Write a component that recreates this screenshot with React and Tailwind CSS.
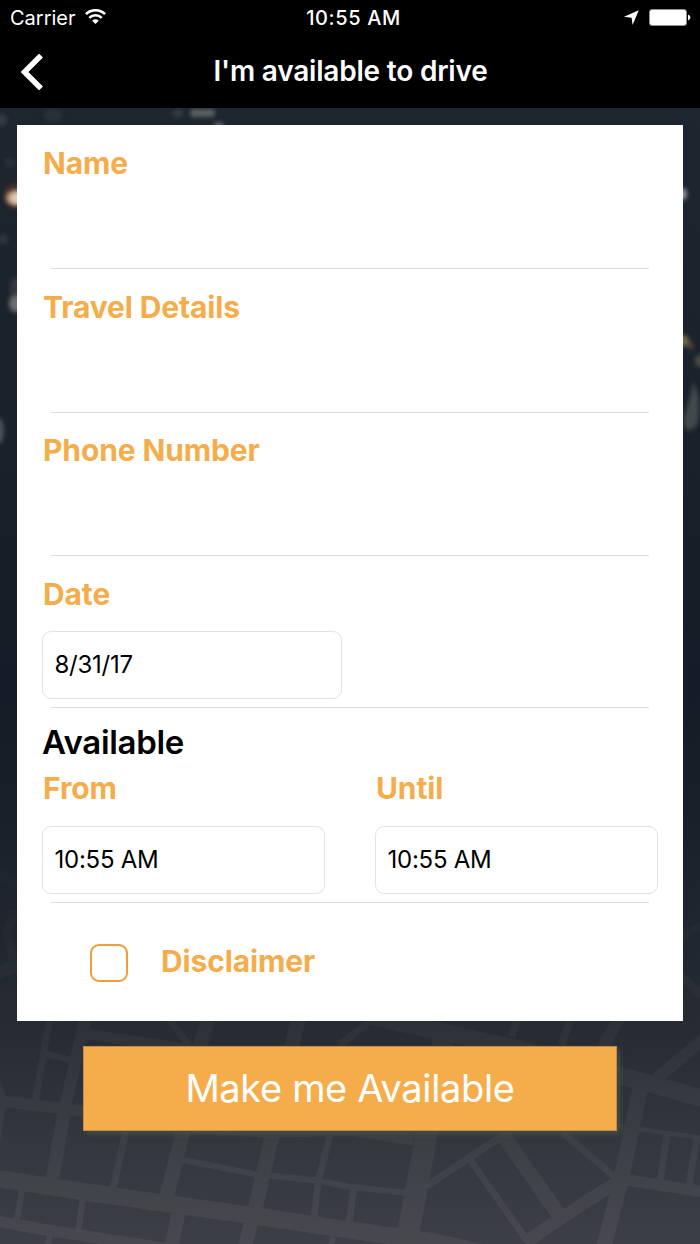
import { useState } from "react";

// street map roads, drawn on a 2100 x 702 grid: [width, points]
const roads = [
  [52, "-20,504 0,507 250,545 510,582 745,615 1050,660 1300,695 1500,740"],
  [34, "-20,270 180,295 250,303 560,350 800,366 1050,360 1240,390"],
  [34, "-20,632 140,660 500,716"],
  [20, "150,20 105,280"],
  [36, "258,20 195,290"],
  [40, "195,290 157,510"],
  [18, "138,132 212,150"],
  [32, "258,72 560,116"],
  [20, "500,20 570,108"],
  [44, "627,20 600,110 549,365 500,560"],
  [44, "897,20 875,110 814,385 765,600"],
  [20, "378,360 340,535"],
  [18, "545,450 770,493 945,511 1050,530 1215,548"],
  [20, "993,365 955,510 942,625"],
  [18, "65,540 50,635"],
  [18, "248,568 235,665"],
  [42, "536,605 515,710"],
  [42, "752,640 735,710"],
  [18, "1000,680 992,710"],
  [18, "150,670 143,710"],
  [22, "1020,105 1120,25"],
  [20, "6,290 -10,400"],
  [22, "-15,200 10,270"],
  [52, "1120,20 1560,118 1870,200 2120,268"],
  [66, "1332,80 1280,370 1222,685"],
  [22, "1552,20 1535,80"],
  [22, "1713,20 1685,105"],
  [36, "1860,20 1810,110"],
  [36, "2120,80 1970,205"],
  [46, "1922,230 1865,500 1812,710"],
  [14, "1850,348 2110,384"],
  [20, "2001,370 1980,520"],
  [20, "2091,380 2066,530"],
  [34, "1850,505 2110,545"],
  [38, "1860,510 1690,620 1575,698"],
  [44, "1505,370 1680,618"],
  [20, "1690,370 1850,505"],
  [22, "1495,385 1280,528"],
  [20, "1412,452 1580,690"],
  [20, "1062,530 1046,650"],
  [34, "-10,-410 60,-370"],
  [26, "45,-300 20,-230 45,-130"],
  [36, "-10,-110 60,-135"],
  [24, "2040,-220 2110,-255"],
  [24, "2040,-105 2110,-40"],
];

function Background() {
  return (
    <svg className="absolute inset-0" width="700" height="1244" viewBox="0 0 700 1244">
      <defs>
        <linearGradient id="sky" x1="0" y1="0" x2="0" y2="1">
          <stop offset="0" stopColor="#1e2731" />
          <stop offset="0.12" stopColor="#1d252f" />
          <stop offset="0.35" stopColor="#19222b" />
          <stop offset="0.55" stopColor="#141c27" />
          <stop offset="0.66" stopColor="#18212a" />
          <stop offset="0.83" stopColor="#272b34" />
          <stop offset="0.92" stopColor="#33383e" />
          <stop offset="1" stopColor="#3c3f45" />
        </linearGradient>
        <linearGradient id="road" gradientUnits="userSpaceOnUse" x1="0" y1="-600" x2="0" y2="702">
          <stop offset="0" stopColor="#19212a" />
          <stop offset="0.48" stopColor="#2d3038" />
          <stop offset="0.75" stopColor="#3b3f43" />
          <stop offset="1" stopColor="#47494f" />
        </linearGradient>
        <filter id="soft" x="-50%" y="-50%" width="200%" height="200%">
          <feGaussianBlur stdDeviation="2" />
        </filter>
      </defs>
      <rect width="700" height="1244" fill="url(#sky)" />

      {/* city lights */}
      <g filter="url(#soft)">
        <ellipse cx="178" cy="113" rx="5" ry="4" fill="#344044" />
        <rect x="190" y="109" width="25" height="8" rx="4" fill="#5b6062" />
        <ellipse cx="219" cy="125" rx="5" ry="3" fill="#60686a" />
        <ellipse cx="53" cy="115" rx="10" ry="7" fill="#253138" />
        <ellipse cx="2" cy="120" rx="5" ry="6" fill="#303d43" />
        <ellipse cx="10" cy="162" rx="5" ry="4" fill="#27333b" />
        <ellipse cx="15" cy="196" rx="11" ry="12" fill="#4b3029" />
        <ellipse cx="16" cy="198" rx="10" ry="7" fill="#b58560" />
        <ellipse cx="18" cy="198" rx="8" ry="6" fill="#d9cbb8" />
        <ellipse cx="3" cy="239" rx="5" ry="5" fill="#2b373c" />
        <rect x="10" y="278" width="14" height="34" rx="7" fill="#34393f" />
        <ellipse cx="16" cy="304" rx="7" ry="8" fill="#6e6e70" />
        <ellipse cx="-2" cy="431" rx="6" ry="13" fill="#4a5359" />
        <ellipse cx="683" cy="194" rx="4" ry="6" fill="#9a8f9d" />
        <ellipse cx="684" cy="341" rx="5" ry="6" fill="#6f684b" />
        <ellipse cx="691" cy="346" rx="3" ry="4" fill="#4d3c3a" />
        <ellipse cx="699" cy="361" rx="4" ry="6" fill="#504d43" />
        <path d="M693 382q9 16 5 38c-2 12-13 14-14 3-1-9 7-24 9-41z" fill="#42484c" />
      </g>

      <g transform="translate(0 1010) scale(0.33333)" fill="none" stroke="url(#road)">
        {roads.map(([width, points]) => (
          <polyline key={points} points={points} strokeWidth={width} />
        ))}
      </g>
    </svg>
  );
}

function StatusBar() {
  return (
    <div className="grid h-9 grid-cols-3 items-center pl-[10px] pr-[9px] text-[20px] leading-9">
      <div className="flex items-center gap-[9px]">
        <span>Carrier</span>
        <svg className="-mt-[3px]" width="21" height="15" viewBox="0 0 21 15" fill="none" stroke="#fff" strokeWidth="2.6">
          <path d="M0.9 5.2a13.6 13.6 0 0 1 19.2 0" />
          <path d="M4.3 8.8a8.8 8.8 0 0 1 12.4 0" />
          <path d="M10.5 15l-3.3-3.3a4.7 4.7 0 0 1 6.6 0z" fill="#fff" stroke="none" />
        </svg>
      </div>
      <div className="pl-[6px] text-center font-medium tracking-[0.6px] whitespace-nowrap">10:55 AM</div>
      <div className="flex items-center justify-end gap-[10px]">
        <svg className="-mt-px" width="15" height="15" viewBox="0 0 15 15" fill="#fff">
          <path d="M14.8 0.2L8.6 15L7.6 7.7L0 6.8z" />
        </svg>
        <svg className="-mt-px" width="42" height="17" viewBox="0 0 42 17">
          <rect x="0.5" y="0.5" width="37" height="16" rx="2.5" fill="#fff" stroke="#8e8e8e" />
          <path d="M39 5.5q2.4 1 2.4 3t-2.4 3z" fill="#fff" />
        </svg>
      </div>
    </div>
  );
}

function Label({ children }) {
  return (
    <div className="text-[30px] leading-9 font-bold tracking-[-0.12px] text-[#f5ad4b]">{children}</div>
  );
}

function Field({ label, className, value, onChange }) {
  return (
    <label className={`block ${className}`}>
      <Label>{label}</Label>
      <input
        className="mt-2 block h-16 w-full px-2 text-[24px] outline-none"
        value={value}
        onChange={(e) => onChange(e.target.value)}
      />
    </label>
  );
}

function Picker({ value, className }) {
  return (
    <button
      className={`-ml-px flex h-[68px] items-center rounded-[9px] border border-[#e2e2e2] pl-[11.5px] pb-px text-[24px] tracking-[-0.25px] text-black ${className}`}
    >
      {value}
    </button>
  );
}

function Divider() {
  return <div className="ml-2 mr-[9px] h-px bg-[#dddddd]" />;
}

export default function App() {
  const [form, setForm] = useState({ name: "", travel: "", phone: "" });
  const [accepted, setAccepted] = useState(false);

  const update = (key) => (value) => setForm((prev) => ({ ...prev, [key]: value }));

  return (
    <div className="relative h-[1244px] w-[700px] overflow-hidden font-['Inter',sans-serif]">
      <Background />

      <div className="relative">
        {/* header */}
        <header className="h-[108px] bg-black text-white">
          <StatusBar />
          <div className="grid h-[71px] grid-cols-[60px_1fr_60px] items-center">
            <svg className="ml-5" width="24" height="36" viewBox="0 0 24 36" fill="none" stroke="#fff" strokeWidth="5.5">
              <path d="M21 1.5L4.5 18L21 34.5" />
            </svg>
            <h1 className="-mt-px pl-px text-center text-[28px] font-semibold tracking-[-0.2px] whitespace-nowrap">
              I'm available to drive
            </h1>
          </div>
        </header>

        {/* form */}
        <main className="mx-[17px] mt-[17px] h-[896px] bg-white pl-[26px] pr-[25px]">
          <Field label="Name" className="h-[143px] pt-5" value={form.name} onChange={update("name")} />
          <Divider />
          <Field label="Travel Details" className="h-[143px] pt-5" value={form.travel} onChange={update("travel")} />
          <Divider />
          <Field label="Phone Number" className="h-[142px] pt-[19px]" value={form.phone} onChange={update("phone")} />
          <Divider />

          <div className="h-[151px] pt-5">
            <Label>Date</Label>
            <Picker value="8/31/17" className="mt-[19px] w-[300px]" />
          </div>
          <Divider />

          <div className="h-[194px] pt-[14px]">
            <h2 className="-ml-px text-[33px] leading-10 font-semibold tracking-[-0.3px] text-black">Available</h2>
            <div className="mt-2 grid grid-cols-[283px_283px] gap-[50px]">
              <div>
                <Label>From</Label>
                <Picker value="10:55 AM" className="mt-5 w-[283px]" />
              </div>
              <div>
                <Label>Until</Label>
                <Picker value="10:55 AM" className="mt-5 w-[283px]" />
              </div>
            </div>
          </div>
          <Divider />

          <div className="flex items-center gap-[33px] pt-[37px] pl-[47px]">
            <button
              className="mt-1 h-[38px] w-[38px] rounded-[9px] border-2 border-[#f09c38] text-[#f09c38]"
              onClick={() => setAccepted(!accepted)}
            >
              {accepted ? "✓" : ""}
            </button>
            <Label>Disclaimer</Label>
          </div>
        </main>

        <button className="ml-[83px] mt-[25px] block h-[85px] w-[534px] border border-[#c08d48] bg-[#f5ad4b] text-[38px] tracking-[-0.35px] text-white shadow-[3px_3px_5px_rgba(75,80,78,0.8)]">
          Make me Available
        </button>
      </div>
    </div>
  );
}
